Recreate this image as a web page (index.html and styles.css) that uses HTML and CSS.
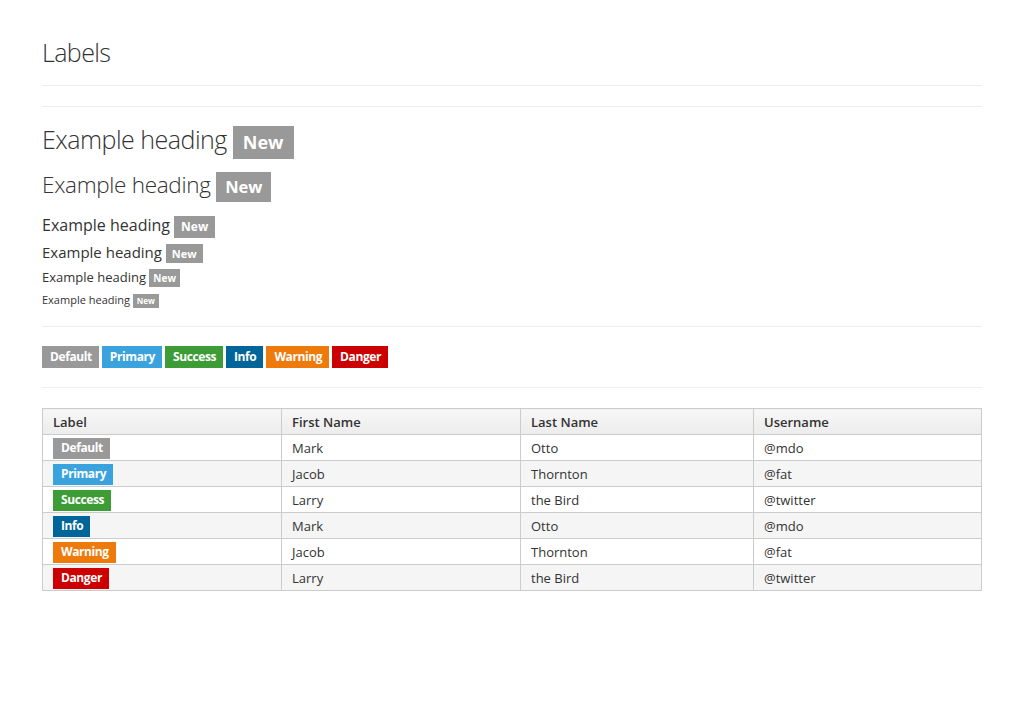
FILE: index.html
```html
<!DOCTYPE html>
<html>
<head>
<meta charset="utf-8">
<link rel="stylesheet" href="styles.css">
<title>Labels</title>
</head>
<body>
<div class="container">
  <div class="page-header">
    <h1 class="title">Labels</h1>
  </div>
  <hr class="rule">
  <div class="headings">
    <h1 class="h h1">Example heading <span class="label label-default">New</span></h1>
    <h2 class="h h2">Example heading <span class="label label-default">New</span></h2>
    <h3 class="h h3">Example heading <span class="label label-default">New</span></h3>
    <h4 class="h h4">Example heading <span class="label label-default">New</span></h4>
    <h5 class="h h5">Example heading <span class="label label-default">New</span></h5>
    <h6 class="h h6">Example heading <span class="label label-default">New</span></h6>
  </div>
  <hr class="rule">
  <div class="label-row">
    <span class="label label-default">Default</span>
    <span class="label label-primary">Primary</span>
    <span class="label label-success">Success</span>
    <span class="label label-info">Info</span>
    <span class="label label-warning">Warning</span>
    <span class="label label-danger">Danger</span>
  </div>
  <hr class="rule">
  <table class="table">
    <thead>
      <tr><th class="c1">Label</th><th class="c2">First Name</th><th class="c3">Last Name</th><th>Username</th></tr>
    </thead>
    <tbody>
      <tr><td><span class="label label-default">Default</span></td><td>Mark</td><td>Otto</td><td>@mdo</td></tr>
      <tr><td><span class="label label-primary">Primary</span></td><td>Jacob</td><td>Thornton</td><td>@fat</td></tr>
      <tr><td><span class="label label-success">Success</span></td><td>Larry</td><td>the Bird</td><td>@twitter</td></tr>
      <tr><td><span class="label label-info">Info</span></td><td>Mark</td><td>Otto</td><td>@mdo</td></tr>
      <tr><td><span class="label label-warning">Warning</span></td><td>Jacob</td><td>Thornton</td><td>@fat</td></tr>
      <tr><td><span class="label label-danger">Danger</span></td><td>Larry</td><td>the Bird</td><td>@twitter</td></tr>
    </tbody>
  </table>
</div>
</body>
</html>
```
FILE: styles.css
```css
* { box-sizing: border-box; }
html, body { margin: 0; padding: 0; background: #fff; }
body {
  font-family: "Open Sans", "Liberation Sans", sans-serif;
  font-size: 13px;
  line-height: 20px;
  color: #333;
}
.container { width: 940px; margin: 0 auto; }

.page-header {
  margin-top: 32px;
  padding-bottom: 13px;
  border-bottom: 1px solid #eee;
}
.title {
  margin: 0;
  font-size: 25px;
  font-weight: 300;
  letter-spacing: -0.6px;
  line-height: 40px;
  color: #333;
}
.rule {
  margin: 20px 0;
  border: 0;
  border-top: 1px solid #eee;
  height: 0;
}

.headings { display: flex; flex-direction: column; align-items: flex-start; }
.h { margin: 0; color: #333; }
.h1 { font-size: 25px; font-weight: 300; letter-spacing: -0.5px; line-height: 34px; margin-top: -5px; }
.h2 { font-size: 22.5px; font-weight: 300; letter-spacing: -0.3px; line-height: 32px; margin-top: 10px; }
.h3 { font-size: 16px; font-weight: 400; line-height: 22px; margin-top: 12px; }
.h4 { font-size: 15px; font-weight: 400; line-height: 20px; margin-top: 4px; }
.h5 { font-size: 13px; font-weight: 400; line-height: 18px; margin-top: 5px; }
.h6 { font-size: 11px; font-weight: 400; line-height: 16px; margin-top: 5px; margin-bottom: -2px; }

.label {
  display: inline-block;
  padding: 3px 7px 3px 8px;
  font-size: 12px;
  font-weight: 700;
  letter-spacing: -0.4px;
  line-height: 16px;
  color: #fff;
  white-space: nowrap;
  vertical-align: baseline;
}
.h .label { letter-spacing: 0; }
.h1 .label { font-size: 18px; line-height: 22px; padding: 5px 10px 6px; }
.h2 .label { font-size: 16.5px; line-height: 20px; padding: 5px 9px 5px; }
.h3 .label { font-size: 12px; line-height: 16px; padding: 3px 7px; }
.h4 .label { font-size: 11px; line-height: 13px; padding: 3px 6px; }
.h5 .label { font-size: 10px; line-height: 12px; padding: 3px 4px; }
.h6 .label { font-size: 8px; line-height: 10px; padding: 2px 4px; }

.label-default { background: #999; }
.label-primary { background: #3aa3de; }
.label-success { background: #3d9c35; }
.label-info { background: #006699; }
.label-warning { background: #ee7a0c; }
.label-danger { background: #cc0000; }

.label-row { display: flex; gap: 3px; margin-top: -1px; margin-bottom: -1px; }

.table {
  width: 100%;
  border-collapse: collapse;
  border: 1px solid #ccc;
}
.table th, .table td {
  text-align: left;
  padding: 0 10px;
  height: 26px;
  border: 1px solid #ccc;
  vertical-align: middle;
}
.table th {
  font-weight: 600;
  background: linear-gradient(#f7f7f7, #ececec);
}
.table td .label { padding: 2px 7px 3px 8px; }
.table tbody tr:nth-child(even) td { background: #f5f5f5; }
.c1 { width: 239px; }
.c2 { width: 239px; }
.c3 { width: 233px; }
```
